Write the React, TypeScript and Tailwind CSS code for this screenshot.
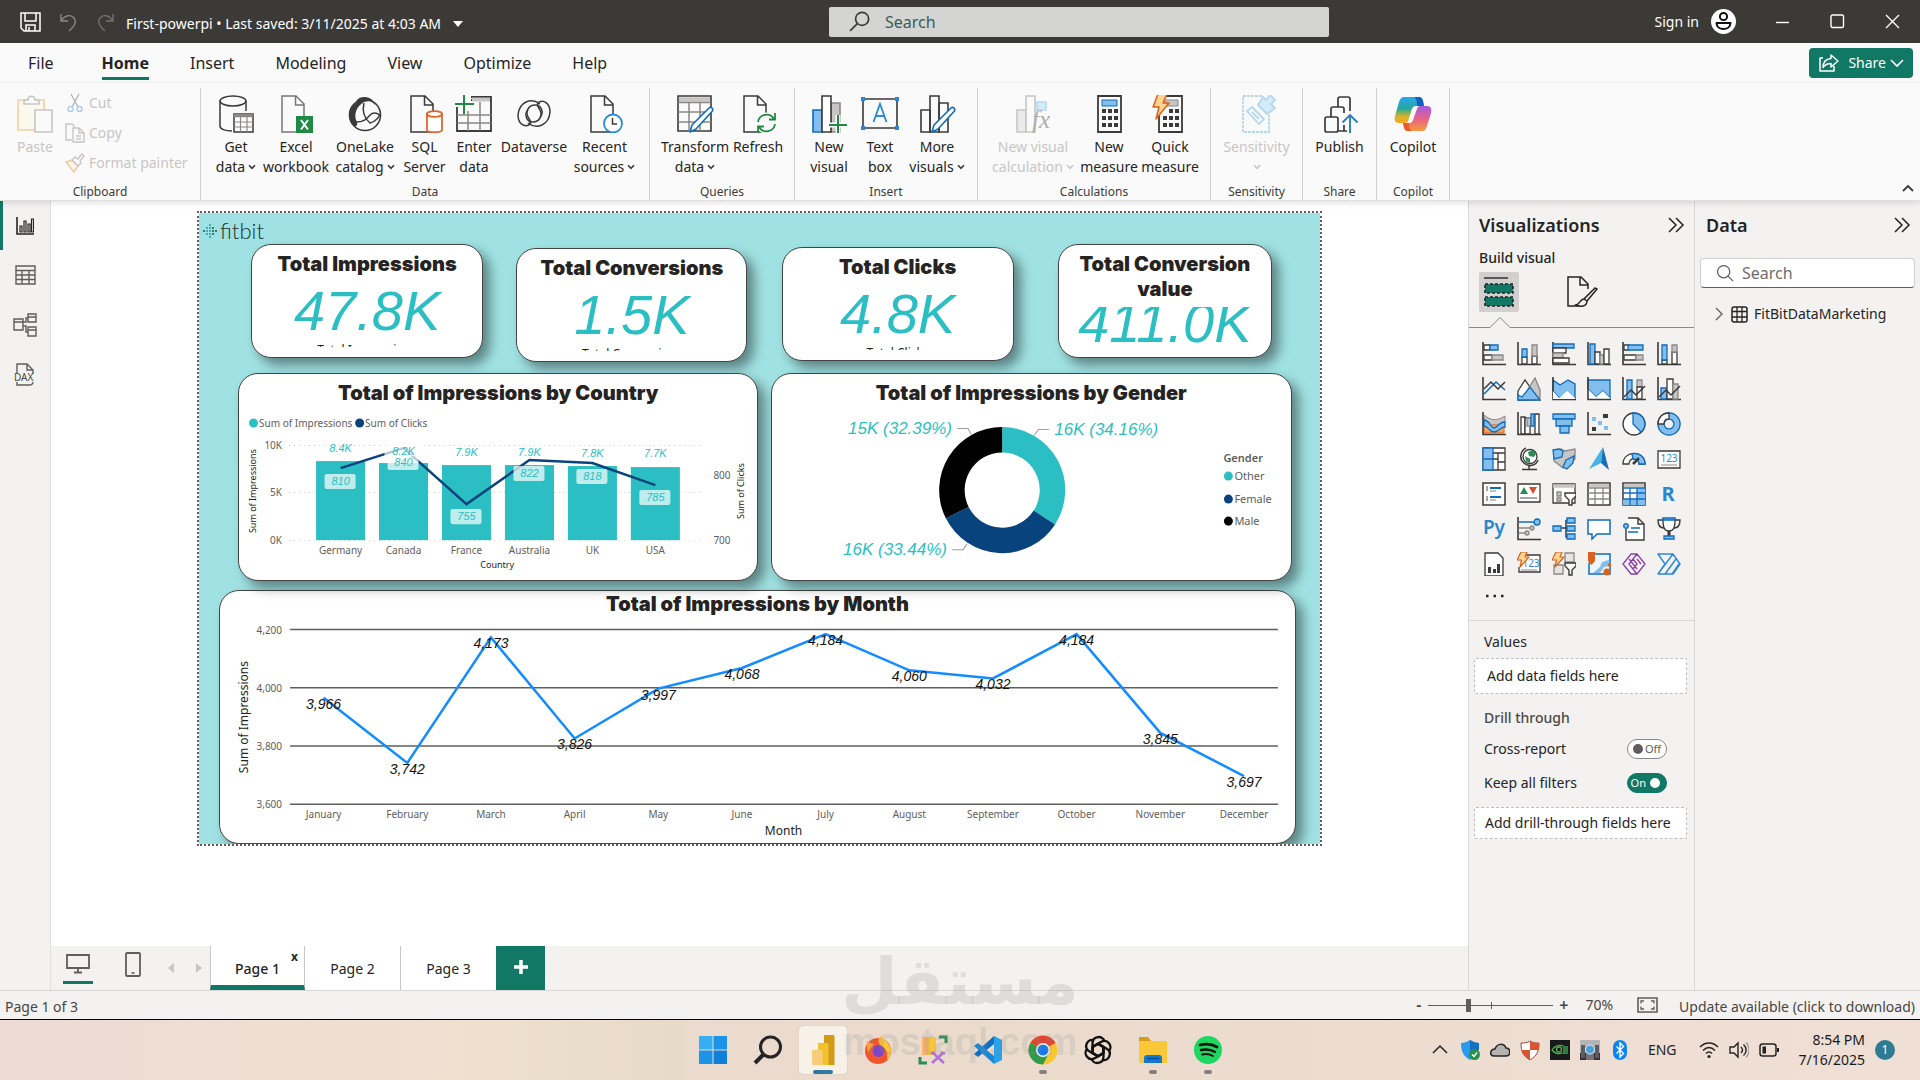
import React from "react";

const K = "#3b3a39";
const G = "#c8c6c4";
const GS = "#8a8886";
const B = "#83beec";
const BS = "#0f6cbd";
const TEAL = "#2bbfc3";
const NAVY = "#09437d";

type Kids = { children?: React.ReactNode };

/* ---------- small shared glyphs ---------- */

function Svg({ w = 24, h, vb, children, label }: Kids & { w?: number; h?: number; vb?: string; label?: string }) {
  return (
    <svg
      width={w}
      height={h ?? w}
      viewBox={vb ?? `0 0 ${w} ${h ?? w}`}
      fill="none"
      className="shrink-0"
      aria-hidden={label ? undefined : true}
      aria-label={label}
    >
      {children}
    </svg>
  );
}

function Chevron({ color = K }: { color?: string }) {
  return (
    <Svg w={8} h={6}>
      <path d="M1 1.2 4 4.4 7 1.2" stroke={color} strokeWidth="1.6" />
    </Svg>
  );
}

function DoubleChevron() {
  return (
    <Svg w={18}>
      <path d="M2 2l7 7-7 7M9 2l7 7-7 7" stroke="#252423" strokeWidth="1.5" />
    </Svg>
  );
}

function Lens({ size, flip, color }: { size: number; flip?: boolean; color: string }) {
  return (
    <Svg w={size} vb="0 0 20 20">
      {flip ? (
        <g stroke={color} strokeWidth="1.6">
          <circle cx="12.5" cy="7.5" r="6.2" />
          <path d="M8 12 1 19" />
        </g>
      ) : (
        <g stroke={color} strokeWidth="1.4">
          <circle cx="8.5" cy="8.5" r="6.8" />
          <path d="m13.5 13.5 5.5 5.5" />
        </g>
      )}
    </Svg>
  );
}

/* ---------- title bar ---------- */

function TitleBar() {
  return (
    <header className="grid h-[43px] grid-cols-[829fr_500fr_591fr] items-center bg-[#3b3a37] text-sm text-white">
      <div className="flex items-center">
        <button aria-label="Save" className="ml-5">
          <Svg w={21} h={20}>
            <path d="M1 1h19v18H4l-3-3zM5 1v8h11V1M6 19v-6h9v6M9 19v-4" stroke="#fff" strokeWidth="1.5" />
          </Svg>
        </button>
        <button aria-label="Undo" className="ml-[18px]">
          <Svg w={19} h={20}>
            <path d="M2 2v7h7M2 9c4-6 10-7 13-3s1 8-5 13" stroke="#8a8886" strokeWidth="1.4" />
          </Svg>
        </button>
        <button aria-label="Redo" className="ml-[18px]">
          <Svg w={19} h={20}>
            <path d="M17 2v7h-7M17 9C13 3 7 2 4 6s-1 8 5 13" stroke="#72716e" strokeWidth="1.4" />
          </Svg>
        </button>
        <button className="ml-[11px] flex items-center gap-3 pt-1 whitespace-nowrap">
          First-powerpi • Last saved: 3/11/2025 at 4:03 AM
          <Svg w={10} h={6}>
            <path d="M0 0h10L5 6z" fill="#fff" />
          </Svg>
        </button>
      </div>
      <label className="flex h-[30px] items-center gap-[15px] rounded-xs bg-[#d4d4d2] pl-5">
        <Lens size={21} flip color="#3b3a37" />
        <input
          aria-label="Search"
          placeholder="Search"
          className="min-w-0 flex-1 bg-transparent text-base outline-none placeholder:text-[#3a5c58]"
        />
      </label>
      <div className="flex items-center justify-end pr-5">
        <button className="flex items-center gap-3">
          Sign in
          <Svg w={25}>
            <circle cx="12.5" cy="12.5" r="12.5" fill="#fff" />
            <circle cx="12.5" cy="7.5" r="3.6" stroke="#111" strokeWidth="2" />
            <path d="M5.5 14h14c0 8-14 8-14 0z" stroke="#111" strokeWidth="2" strokeLinejoin="round" />
          </Svg>
        </button>
        <button aria-label="Minimize" className="ml-10">
          <Svg w={14}>
            <path d="M0 7.5h13" stroke="#fff" strokeWidth="1.4" />
          </Svg>
        </button>
        <button aria-label="Maximize" className="ml-10">
          <Svg w={15}>
            <rect x="1" y="1" width="12.5" height="12.5" rx="1.5" stroke="#fff" strokeWidth="1.4" />
          </Svg>
        </button>
        <button aria-label="Close" className="ml-10">
          <Svg w={15}>
            <path d="m1 1 13 13M14 1 1 14" stroke="#fff" strokeWidth="1.4" />
          </Svg>
        </button>
      </div>
    </header>
  );
}

/* ---------- menu ---------- */

function MenuBar() {
  return (
    <nav className="flex h-10 items-center bg-[#fafafa] pr-[7px] pl-7 text-base text-[#252423]">
      <div className="flex gap-[41px]">
        <button className="mr-[7px]">File</button>
        <button className="relative font-bold">
          Home
          <span className="absolute inset-x-0 -bottom-[5px] h-[3px] bg-[#117865]" />
        </button>
        <button>Insert</button>
        <button>Modeling</button>
        <button>View</button>
        <button>Optimize</button>
        <button>Help</button>
      </div>
      <button className="ml-auto flex h-[30px] items-center gap-2 rounded-sm bg-[#117865] px-[9px] text-sm text-white">
        <Svg w={22} h={20}>
          <path
            d="M5 5H2v13h14v-5M13 2l7 6-7 6v-3.500c-4 0-6 1-8 4 0-5 3-8.500 8-9z"
            stroke="#fff"
            strokeWidth="1.5"
            strokeLinejoin="round"
          />
        </Svg>
        <span className="flex items-center gap-1">
          Share
          <Svg w={14} h={9}>
            <path d="m1 1 6 6 6-6" stroke="#fff" strokeWidth="1.6" />
          </Svg>
        </span>
      </button>
    </nav>
  );
}

/* ---------- ribbon icons, drawn on a 38 unit square ---------- */

const page = "M5 1h14l8 8v28H5zM18.500 1v9H27";
const barsOutline = (
  <>
    <path d="M3 15h9v22H3z" />
    <path d="M12 1h9v36h-9z" />
    <path d="M21 8h9v29h-9z" />
  </>
);
const pencil = (
  <path
    d="M33 13c2-2 5 1 3 3.500L20 34l-6 3 2-7z"
    fill="#fff"
    stroke={BS}
    strokeWidth="1.600"
    strokeLinejoin="round"
  />
);
const bolt = (
  <path d="M8 0h9l-4 9h6L6 25l3-12H3z" fill="#ffd591" stroke="#d9621e" strokeWidth="1.500" strokeLinejoin="round" />
);
const swirl = "M25 9C16 2 4 7 3 20c0 9 6 12 11 10 3-2 1-5-1-8-3-6 1-12 7-12 7 0 9 8 5 12";

const ribbonIcons: Record<string, React.ReactNode> = {
  paste: (
    <g stroke={G} strokeWidth="1.600">
      <path d="M2 5h26v30H2z" stroke="#f3cfa5" fill="#fdf8ee" />
      <path d="M8 9V5h4c0-5 7-5 7 0h4v4z" fill="#fafafa" />
      <path d="M19 15h17v22H19z" fill="#fafafa" />
    </g>
  ),
  getData: (
    <g stroke={K} strokeWidth="1.500">
      <path d="M3 6v25c0 3 5 5 12 5" />
      <path d="M29 6v10" />
      <ellipse cx="16" cy="6" rx="13" ry="5" />
      <path d="M17 19h19v18H17z" fill="#fff" />
      <path d="M17 20.500h19" stroke={GS} strokeWidth="3.500" />
      <path d="M17 27h19M17 32h19M23.500 22v15M30 22v15" strokeWidth="1.200" stroke={GS} />
    </g>
  ),
  excel: (
    <g>
      <path d={page} stroke="#797775" strokeWidth="1.500" />
      <path d="M19 21h17v17H19z" fill="#1f8a43" />
      <path d="m24 25 7 9.500M31 25l-7 9.500" stroke="#fff" strokeWidth="2" />
    </g>
  ),
  onelake: (
    <g>
      <circle cx="19" cy="20" r="15.500" stroke={K} strokeWidth="1.600" />
      <path d="M18 2c-5 0-8 3-8 6C2 13 1 24 7 30c3 3 6 0 3-5-2-7 1-14 8-18 6-2 10 0 11 4C28 4 23 2 18 2z" fill={K} />
      <path d="M18 8c-2 8 0 15 6 20 4-1 8-4 10-9M10 27c7 0 10-2 14-7 3-3 7-2 10 0" stroke={K} strokeWidth="1.500" />
    </g>
  ),
  sql: (
    <g>
      <path d={page} stroke={K} strokeWidth="1.500" />
      <path d="M21 19v16c0 3 15 3 15 0V19z" fill="#fff" stroke="#e0662a" strokeWidth="1.800" />
      <ellipse cx="28.500" cy="19" rx="7.500" ry="2.800" fill="#fff" stroke="#e0662a" strokeWidth="1.800" />
    </g>
  ),
  enter: (
    <g>
      <path d="M2 12v24h34V2H16M16 5h20" stroke={K} strokeWidth="1.800" />
      <path d="M17 4.500h18" stroke={G} strokeWidth="4" />
      <path d="M2 20h34M2 28h34M13 16v20M25 7v29" stroke={GS} strokeWidth="1.500" />
      <path d="M9-1v20M0 9h19" stroke="#1f8a43" strokeWidth="2" />
    </g>
  ),
  dataverse: (
    <g stroke={K} strokeWidth="1.500">
      <path d={swirl} />
      <path d={swirl} transform="rotate(180 19 18.500)" />
    </g>
  ),
  recent: (
    <g>
      <path d={page} stroke={K} strokeWidth="1.500" />
      <circle cx="27" cy="28.500" r="9" fill="#fff" stroke="#2b88d8" strokeWidth="1.800" />
      <path d="M26.500 23v6H31" stroke={K} strokeWidth="1.500" />
    </g>
  ),
  transform: (
    <g>
      <path d="M2 1h33v35H2z" stroke={K} strokeWidth="1.600" />
      <path d="M3 4.500h31" stroke={G} strokeWidth="4.500" />
      <path d="M2 7.500h33M2 17h33M2 27h33M13 8v28M24 8v28" stroke={GS} strokeWidth="1.500" />
      {pencil}
    </g>
  ),
  refresh: (
    <g>
      <path d={page} stroke={K} strokeWidth="1.500" />
      <circle cx="27" cy="28" r="10.500" fill="#fafafa" />
      <path d="M19 27c1-8 12-10 16-3M36 29c-1 8-12 10-16 3M36 18v6.500h-6M19 38v-6.500h6" stroke="#1f8a43" strokeWidth="1.800" />
    </g>
  ),
  newVisual: (
    <g stroke={K} strokeWidth="1.600">
      <path d="M3 15h9v22H3z" fill={B} stroke={BS} />
      <path d="M21 8h9v29h-9z" fill={G} stroke={GS} />
      <path d="M12 1h9v36h-9z" fill="#fff" />
      <path d="M28 20v19M19 30h19" stroke="#fafafa" strokeWidth="5" />
      <path d="M28 20v19M19 30h18" stroke="#1f8a43" strokeWidth="2" />
    </g>
  ),
  textBox: (
    <g>
      <path d="M2 4h34v29H2z" stroke={K} strokeWidth="1.600" />
      <path d="M0 2h4v4H0zM34 2h4v4h-4zM0 31h4v4H0zM34 31h4v4h-4z" fill="#2b88d8" />
      <path d="m12.500 27 6.500-18 6.500 18M14.500 21h9" stroke="#2b88d8" strokeWidth="1.800" />
    </g>
  ),
  moreVisuals: (
    <g stroke={K} strokeWidth="1.600">
      {barsOutline}
      {pencil}
    </g>
  ),
  visualCalc: (
    <g stroke="#c8c6c4" strokeWidth="1.600">
      <path d="M3 15h9v22H3z" fill="#eceae8" />
      <path d="M12 1h9v36h-9z" fill="#fafafa" />
      <path d="M23 7h9v8h-9z" fill="#d5ebf9" stroke="#b4dbf3" />
      <text x="18" y="33" fontFamily="Liberation Serif" fontStyle="italic" fontSize="25" fill="#b0aeac" stroke="none">
        fx
      </text>
    </g>
  ),
  measure: (
    <g>
      <path d="M8 1h23v36H8z" stroke={K} strokeWidth="1.800" />
      <path d="M12 5h15v6H12z" fill={B} stroke={BS} />
      <path d="M12 14h4v4h-4zM18 14h4v4h-4zM24 14h4v4h-4zM12 21h4v4h-4zM18 21h4v4h-4zM24 21h4v4h-4zM12 28h4v4h-4zM18 28h4v4h-4zM24 28h4v4h-4z" fill={K} />
    </g>
  ),
  quick: (
    <g>
      <path d="M8 1h23v36H8z" stroke={K} strokeWidth="1.800" />
      <path d="M14 5h13v6H14z" fill={G} stroke={GS} />
      <path d="M12 21h4v4h-4zM18 14h4v4h-4zM24 14h4v4h-4zM18 21h4v4h-4zM24 21h4v4h-4zM12 28h4v4h-4zM18 28h4v4h-4zM24 28h4v4h-4z" fill={K} />
      <g transform="translate(-1 -1)">{bolt}</g>
    </g>
  ),
  sensitivity: (
    <g stroke="#b4d8ee" strokeWidth="1.800">
      <path d="M24 1H5v36h26V20" strokeDasharray="3 1" />
      <path d="m14 12 12 12-5 5L9 16zM14 17l7 7" />
      <path d="m20 10 9 9 8-6-4-4 4-4-5-5-4 5-3-3z" fill="#d5ebf9" />
    </g>
  ),
  publish: (
    <g stroke={K} strokeWidth="1.700">
      <rect x="4" y="22" width="13" height="15" rx="2" />
      <path d="M10 22V14q0-2 2-2h9q2 0 2 2v4M17 12V4q0-2 2-2h8q2 0 2 2v12M17 36h9M23 30v6" />
      <path d="M29 38V20M21.500 27.500 29 20l7.500 7.500" stroke="#2b7cc0" strokeWidth="1.900" />
    </g>
  ),
  copilot: (
    <g>
      <defs>
        <linearGradient id="cpA" x1="0" y1="0" x2="0" y2="1">
          <stop offset="0" stopColor="#2aa6f0" />
          <stop offset=".45" stopColor="#24a99a" />
          <stop offset=".75" stopColor="#d8b32a" />
          <stop offset="1" stopColor="#f7a81d" />
        </linearGradient>
        <linearGradient id="cpB" x1="0" y1="0" x2="0" y2="1">
          <stop offset="0" stopColor="#a35de0" />
          <stop offset=".5" stopColor="#e8608a" />
          <stop offset="1" stopColor="#f79a3a" />
        </linearGradient>
      </defs>
      <path d="M10 2h15c4 0 4 4 5 9h-8c-3 0-4 2-5 6l-3 9c-1 2-2 2-4 2H5c-4 0-5-3-4-7L5 7c1-3 2-5 5-5z" fill="url(#cpA)" />
      <path d="M20 2h5c4 0 4 4 5 9h-7c0-4 0-7-3-9z" fill="#0d62c4" />
      <path d="M28 36H14c-4 0-4-4-5-8h6c3 0 4-2 5-6l3-8c1-3 2-3 4-3h6c4 0 5 3 4 7l-4 13c-1 3-2 5-5 5z" fill="url(#cpB)" />
      <path d="M18 36h-4c-4 0-4-4-5-8h6c0 4 0 6 3 8z" fill="#ea5a2c" />
    </g>
  ),
};

type RBtn = { icon: string; a: string; b?: string; drop?: boolean; off?: boolean; w: string };

function RibbonButton({ icon, a, b, drop, off, w }: RBtn) {
  return (
    <button
      disabled={off}
      className={`flex flex-col items-center text-sm leading-5 whitespace-nowrap ${off ? "text-[#c8c6c4]" : "text-[#252423]"} ${w}`}
    >
      <Svg w={38}>{ribbonIcons[icon]}</Svg>
      <span className="mt-1">{a}</span>
      <span className="flex h-5 items-center gap-[3px]">
        {b}
        {drop && <Chevron color={off ? G : K} />}
      </span>
    </button>
  );
}

function RibbonGroup({ name, children }: Kids & { name: string }) {
  return (
    <section className="flex flex-col justify-between border-r border-[#d2d0ce] px-[9px] pt-[7px]">
      <div className="flex">{children}</div>
      <div className="text-center text-xs leading-4 whitespace-nowrap text-[#3b3a39]">{name}</div>
    </section>
  );
}

const groups: { name: string; items: RBtn[] }[] = [
  {
    name: "Data",
    items: [
      { icon: "getData", a: "Get", b: "data", drop: true, w: "w-[52px]" },
      { icon: "excel", a: "Excel", b: "workbook", w: "w-[68px]" },
      { icon: "onelake", a: "OneLake", b: "catalog", drop: true, w: "w-[70px]" },
      { icon: "sql", a: "SQL", b: "Server", w: "w-[49px]" },
      { icon: "enter", a: "Enter", b: "data", w: "w-[50px]" },
      { icon: "dataverse", a: "Dataverse", w: "w-[70px]" },
      { icon: "recent", a: "Recent", b: "sources", drop: true, w: "w-[71px]" },
    ],
  },
  {
    name: "Queries",
    items: [
      { icon: "transform", a: "Transform", b: "data", drop: true, w: "w-[72px]" },
      { icon: "refresh", a: "Refresh", w: "w-[54px]" },
    ],
  },
  {
    name: "Insert",
    items: [
      { icon: "newVisual", a: "New", b: "visual", w: "w-[50px]" },
      { icon: "textBox", a: "Text", b: "box", w: "w-[52px]" },
      { icon: "moreVisuals", a: "More", b: "visuals", drop: true, w: "w-[62px]" },
    ],
  },
  {
    name: "Calculations",
    items: [
      { icon: "visualCalc", a: "New visual", b: "calculation", drop: true, off: true, w: "w-[92px]" },
      { icon: "measure", a: "New", b: "measure", w: "w-[60px]" },
      { icon: "quick", a: "Quick", b: "measure", w: "w-[62px]" },
    ],
  },
  { name: "Sensitivity", items: [{ icon: "sensitivity", a: "Sensitivity", drop: true, off: true, w: "w-[73px]" }] },
  { name: "Share", items: [{ icon: "publish", a: "Publish", w: "w-[55px]" }] },
  { name: "Copilot", items: [{ icon: "copilot", a: "Copilot", w: "w-[54px]" }] },
];

function Ribbon() {
  return (
    <div className="relative z-10 flex h-[118px] items-stretch border-b border-[#e1dfdd] bg-[#fafafa] pt-[5px] shadow-[0_2px_6px_rgba(0,0,0,0.12)]">
      <RibbonGroup name="Clipboard">
        <div className="flex w-[182px]">
          <RibbonButton icon="paste" a="Paste" off w="w-[52px]" />
          <div className="-mt-0.5 flex flex-col gap-[10px] text-sm leading-5 whitespace-nowrap text-[#c8c6c4]">
            <button disabled className="flex items-center gap-1 pl-1">
              <Svg w={20}>
                <path d="m6 1 7 13M14 1 7 14" stroke={GS} strokeOpacity=".6" strokeWidth="1.400" />
                <circle cx="5.500" cy="16" r="2.500" stroke="#a9cfe8" strokeWidth="1.400" />
                <circle cx="14.500" cy="16" r="2.500" stroke="#a9cfe8" strokeWidth="1.400" />
              </Svg>
              Cut
            </button>
            <button disabled className="flex items-center gap-1 pl-1">
              <Svg w={20}>
                <path d="M7 17H1V1h6l3 3M8 5h6l5 5v9H8zM14 5v5h5M11 13h5M11 16h5" stroke={G} strokeWidth="1.400" />
              </Svg>
              Copy
            </button>
            <button disabled className="flex items-center gap-1 pl-1">
              <Svg w={20}>
                <path d="m1 9 6-2 6 6-4 6z" fill="#fdf3e6" stroke="#f0c7a0" strokeWidth="1.400" />
                <path d="m7 7 3-3 3 2 4-5 2 2-4 5 1 2-3 3z" stroke={G} strokeWidth="1.400" />
              </Svg>
              Format painter
            </button>
          </div>
        </div>
      </RibbonGroup>
      {groups.map((g) => (
        <RibbonGroup key={g.name} name={g.name}>
          {g.items.map((i) => (
            <RibbonButton key={i.icon} {...i} />
          ))}
        </RibbonGroup>
      ))}
      <button aria-label="Collapse ribbon" className="mt-auto mr-1.5 mb-2 ml-auto">
        <Svg w={12} h={8}>
          <path d="m1 7 5-5 5 5" stroke={K} strokeWidth="1.800" />
        </Svg>
      </button>
    </div>
  );
}

/* ---------- left rail ---------- */

function Rail() {
  return (
    <aside className="flex w-[51px] shrink-0 flex-col border-r border-[#e1dfdd] bg-[#f3f2f1]">
      <button
        aria-label="Report view"
        className="flex h-[49px] items-center justify-center border-l-[3px] border-[#117865] pr-[3px]"
      >
        <Svg w={18}>
          <path d="M1 0v17h17" stroke="#252423" strokeWidth="1.600" />
          <path d="M4 9h2v6H4zM8 4h2v11H8zM12 7h2v8h-2zM15.500 2h2v13h-2z" stroke="#252423" strokeWidth="1.200" />
        </Svg>
      </button>
      <button aria-label="Table view" className="flex h-[50px] items-center justify-center">
        <Svg w={21} h={20}>
          <path d="M1 1h19v18H1zM1 5.500h19M1 10h19M1 14.500h19M7 5v14M14 5v14" stroke="#605e5c" strokeWidth="1.400" />
        </Svg>
      </button>
      <button aria-label="Model view" className="flex h-[50px] items-center justify-center">
        <Svg w={24}>
          <path
            d="M1 6h9v11H1zM1 9h9M15 1h8v8h-8zM15 4h8M15 14h8v9h-8zM15 17h8M10 9h3V5h2M10 13h3v6h2"
            stroke="#605e5c"
            strokeWidth="1.400"
          />
        </Svg>
      </button>
      <button aria-label="DAX query view" className="flex h-[50px] items-center justify-center">
        <Svg w={24}>
          <path d="M4 10V1h10l6 6v4M14 1v6h6M4 19v3h12c3 0 4-1 4-3" stroke="#605e5c" strokeWidth="1.400" />
          <text x="1" y="18" fontSize="10" fontFamily="Noto Sans" fill="#484644">
            DAX
          </text>
        </Svg>
      </button>
    </aside>
  );
}

/* ---------- report canvas ---------- */

const CANVAS_W = 1120;
const CANVAS_H = 630;

type Box = { x: number; y: number; w: number; h: number };

function Visual({ box, children, title, tight }: Kids & { box: Box; title: string; tight?: boolean }) {
  return (
    <section
      className="absolute flex flex-col rounded-[20px] border border-[#444] bg-white shadow-[7px_7px_12px_rgba(0,0,0,0.42)]"
      style={{
        left: `${(box.x / CANVAS_W) * 100}%`,
        top: `${(box.y / CANVAS_H) * 100}%`,
        width: `${(box.w / CANVAS_W) * 100}%`,
        height: `${(box.h / CANVAS_H) * 100}%`,
      }}
    >
      <h2
        className={`px-3 text-center font-['Inter',sans-serif] text-xl leading-[25px] font-black text-[#252423] ${tight ? "pt-px" : "pt-[7px]"}`}
      >
        {title}
      </h2>
      {children}
    </section>
  );
}

function Kpi({ box, title, value, label }: { box: Box; title: string; value: string; label?: string }) {
  return (
    <Visual box={box} title={title}>
      <div className="mt-[5px] mb-[10px] flex min-h-0 flex-1 items-center justify-center overflow-hidden">
        <div className="flex h-14 flex-col items-center font-['Liberation_Sans',sans-serif] whitespace-nowrap">
          <span className="text-[56px] leading-[48px] text-[#2bbfc3] italic">{value}</span>
          {label && (
            <span className="mt-[10px] font-['Noto_Sans',sans-serif] text-xs leading-[10px] text-[#252423]">{label}</span>
          )}
        </div>
      </div>
    </Visual>
  );
}

const countries = [
  { name: "Germany", total: "8.4K", top: 88, ly: 75, clicks: "810", py: 95, by: 101 },
  { name: "Canada", total: "8.2K", top: 90, ly: 78, clicks: "840", py: 75, by: 82 },
  { name: "France", total: "7.9K", top: 92, ly: 79, clicks: "755", py: 131, by: 136 },
  { name: "Australia", total: "7.9K", top: 92, ly: 79, clicks: "822", py: 87, by: 93 },
  { name: "UK", total: "7.8K", top: 93, ly: 80, clicks: "818", py: 90, by: 96 },
  { name: "USA", total: "7.7K", top: 94, ly: 80, clicks: "785", py: 112, by: 117 },
];

const chartClass = "absolute inset-0 h-full w-full overflow-visible font-['Noto_Sans',sans-serif]";

function CountryChart() {
  const cx = (i: number) => 102.500 + i * 62.900;
  return (
    <svg viewBox="1 0 518 206" className={chartClass} role="img" aria-label="Impressions and clicks by country">
      <circle cx="15.500" cy="49" r="4.500" fill={TEAL} />
      <circle cx="121.500" cy="49" r="4.500" fill={NAVY} />
      <g fontSize="10" fill="#605e5c">
        <text x="21" y="53">Sum of Impressions</text>
        <text x="127" y="53">Sum of Clicks</text>
        <g textAnchor="end">
          <text x="44" y="75">10K</text>
          <text x="44" y="122">5K</text>
          <text x="44" y="170">0K</text>
        </g>
        <text x="475" y="105">800</text>
        <text x="475" y="170">700</text>
        <g textAnchor="middle">
          {countries.map((c, i) => (
            <text key={c.name} x={cx(i)} y="180">{c.name}</text>
          ))}
        </g>
      </g>
      <g stroke="#d2d0ce" strokeDasharray="1 4">
        <path d="M51 71.500h415M51 118.500h415M51 166.500h415M471 101.500h8M471 166.500h8" />
      </g>
      <g fontSize="9" fill="#252423" textAnchor="middle">
        <text x="259" y="194">Country</text>
        <text transform="translate(18 117) rotate(-90)">Sum of Impressions</text>
        <text transform="translate(506 117) rotate(-90)">Sum of Clicks</text>
      </g>
      {countries.map((c, i) => (
        <rect key={c.name} x={cx(i) - 24.500} y={c.top - 1} width="49" height={167 - c.top} fill={TEAL} />
      ))}
      <polyline points={countries.map((c, i) => `${cx(i)},${c.py - 1}`).join(" ")} fill="none" stroke={NAVY} strokeWidth="2.500" />
      <rect x={cx(1) - 19} y="69" width="37" height="13" fill="#fff" fillOpacity=".7" />
      <g fontSize="11" fontStyle="italic" fontFamily="Liberation Sans" textAnchor="middle" fill={TEAL}>
        {countries.map((c, i) => (
          <g key={c.name}>
            <rect x={cx(i) - 16} y={c.by - 1} width="31" height="15" rx="2" fill="#fff" fillOpacity=".7" />
            <text x={cx(i)} y={c.ly + 3}>{c.total}</text>
            <text x={cx(i)} y={c.by + 10}>{c.clicks}</text>
          </g>
        ))}
      </g>
    </svg>
  );
}

const slices = [
  { name: "Other", share: 34.160, color: TEAL, ly: 102 },
  { name: "Female", share: 33.440, color: NAVY, ly: 125 },
  { name: "Male", share: 32.390, color: "#000", ly: 147 },
];

function arc(from: number, to: number) {
  const p = (t: number, r: number) => {
    const a = (t / 100) * 2 * Math.PI;
    return `${231 + r * Math.sin(a)} ${116 - r * Math.cos(a)}`;
  };
  return `M${p(from, 63)}A63 63 0 0 1 ${p(to, 63)}L${p(to, 37.500)}A37.500 37.500 0 0 0 ${p(from, 37.500)}z`;
}

function GenderChart() {
  let start = 0;
  return (
    <svg viewBox="1 0 519 206" className={chartClass} role="img" aria-label="Impressions by gender">
      {slices.map((s) => {
        const d = arc(start, start + s.share);
        start += s.share;
        return <path key={s.name} d={d} fill={s.color} />;
      })}
      <path d="M186 54.500h11l3 6M277.500 55.500H267l-4 6M181 175.500h11l4-6" fill="none" stroke="#a19f9d" />
      <g fontSize="17" fontStyle="italic" fontFamily="Liberation Sans" fill={TEAL}>
        <text x="77" y="60">15K (32.39%)</text>
        <text x="283" y="61">16K (34.16%)</text>
        <text x="72" y="181">16K (33.44%)</text>
      </g>
      <g fontSize="11" fill="#605e5c">
        <text x="452" y="88" fontWeight="600">Gender</text>
        {slices.map((s) => (
          <g key={s.name}>
            <circle cx="457" cy={s.ly} r="4.500" fill={s.color} />
            <text x="463" y={s.ly + 4}>{s.name}</text>
          </g>
        ))}
      </g>
    </svg>
  );
}

const months: [string, number][] = [
  ["January", 3966],
  ["February", 3742],
  ["March", 4173],
  ["April", 3826],
  ["May", 3997],
  ["June", 4068],
  ["July", 4184],
  ["August", 4060],
  ["September", 4032],
  ["October", 4184],
  ["November", 3845],
  ["December", 3697],
];

function MonthChart() {
  const mx = (i: number) => 104.500 + i * 83.600;
  const my = (v: number) => 38.500 + (4200 - v) * 0.291;
  return (
    <svg viewBox="1 0 1074 251" className={chartClass} role="img" aria-label="Impressions by month">
      <g stroke="#605e5c" strokeWidth="1.500">
        {[4200, 4000, 3800, 3600].map((v) => (
          <path key={v} d={`M71 ${my(v)}H1058`} />
        ))}
      </g>
      <g fontSize="10" fill="#605e5c">
        {[4200, 4000, 3800, 3600].map((v) => (
          <text key={v} x="63" y={my(v) + 4} textAnchor="end">{v.toLocaleString("en-US")}</text>
        ))}
        {months.map(([m], i) => (
          <text key={m} x={mx(i)} y="227" textAnchor="middle">{m}</text>
        ))}
      </g>
      <g fontSize="12" fill="#252423" textAnchor="middle">
        <text x="564" y="244">Month</text>
        <text transform="translate(29 126) rotate(-90)">Sum of Impressions</text>
      </g>
      <polyline points={months.map(([, v], i) => `${mx(i)},${my(v)}`).join(" ")} fill="none" stroke="#118dff" strokeWidth="2.500" />
      <g fontSize="14" fontStyle="italic" fontFamily="Liberation Sans" textAnchor="middle" fill="#111">
        {months.map(([m, v], i) => (
          <text key={m} x={mx(i)} y={my(v) + 11}>{v.toLocaleString("en-US")}</text>
        ))}
      </g>
    </svg>
  );
}

function FitbitLogo() {
  return (
    <div className="flex items-center gap-[3px] pt-1.5 pl-1">
      <Svg w={14}>
        {[
          [7, 1], [7, 4], [7, 7], [7, 10], [7, 13], [4, 4], [4, 7], [4, 10], [1, 7], [10, 4], [10, 7], [10, 10], [13, 7],
        ].map(([x, y]) => (
          <circle key={`${x}-${y}`} cx={x} cy={y} r="1" fill={x === 7 || x === 4 ? "#1f9ea3" : "#2b4b4c"} />
        ))}
      </Svg>
      <span className="font-['Lato',sans-serif] text-[22px] leading-6 font-light text-[#1d3334]">fitbit</span>
    </div>
  );
}

function ReportCanvas() {
  return (
    <div className="px-[146px] pt-2.5">
      <div className="border-2 border-dotted border-[#605e5c]">
        <div className="relative aspect-video overflow-hidden bg-[#a0e2e3]">
          <FitbitLogo />
          <Visual tight box={{ x: 20, y: 377, w: 1076, h: 253 }} title="Total of Impressions by Month">
            <MonthChart />
          </Visual>
          <Kpi box={{ x: 52, y: 31, w: 232, h: 114 }} title="Total Impressions" value="47.8K" label="Total Impressions" />
          <Kpi box={{ x: 317, y: 35, w: 231, h: 114 }} title="Total Conversions" value="1.5K" label="Total Conversions" />
          <Kpi box={{ x: 582, y: 34, w: 232, h: 114 }} title="Total Clicks" value="4.8K" label="Total Clicks" />
          <Kpi box={{ x: 858, y: 31, w: 214, h: 114 }} title="Total Conversion value" value="411.0K" />
          <Visual box={{ x: 39, y: 160, w: 520, h: 208 }} title="Total of Impressions by Country">
            <CountryChart />
          </Visual>
          <Visual box={{ x: 571, y: 160, w: 521, h: 208 }} title="Total of Impressions by Gender">
            <GenderChart />
          </Visual>
        </div>
      </div>
    </div>
  );
}

/* ---------- page tabs ---------- */

function PageTabs() {
  return (
    <div className="flex h-11 items-stretch bg-[#f3f2f1] text-sm text-[#252423]">
      <button aria-label="Desktop layout" className="ml-3 flex w-[30px] flex-col items-center justify-between pt-2 pb-1.5">
        <Svg w={24} h={20}>
          <path d="M1 1h22v13H1zM12 14v4M8 18.500h8" stroke="#605e5c" strokeWidth="1.800" />
        </Svg>
        <span className="h-[3px] w-full bg-[#117865]" />
      </button>
      <button aria-label="Mobile layout" className="ml-8 flex pt-1.5">
        <Svg w={16} h={26}>
          <rect x="1" y="1" width="14" height="23" rx="1" stroke="#605e5c" strokeWidth="1.800" />
          <path d="M6.500 21h3" stroke="#605e5c" strokeWidth="1.600" />
        </Svg>
      </button>
      <button aria-label="Previous page" className="ml-[27px]">
        <Svg w={6} h={10}>
          <path d="M6 0v10L0 5z" fill={G} />
        </Svg>
      </button>
      <button aria-label="Next page" className="mr-2 ml-[22px]">
        <Svg w={6} h={10}>
          <path d="M0 0v10l6-5z" fill={G} />
        </Svg>
      </button>
      <button className="relative w-[95px] border-x border-b-[5px] border-x-[#c8c6c4] border-b-[#117865] bg-white pt-1.5 font-medium">
        Page 1<span className="absolute top-[3px] right-1.5 text-xs leading-4 font-bold">x</span>
      </button>
      <button className="w-[96px] border-r border-[#c8c6c4] bg-white pt-0.5">Page 2</button>
      <button className="w-[95px] bg-white pt-0.5">Page 3</button>
      <button aria-label="New page" className="flex w-[49px] items-center justify-center bg-[#117865] pb-0.5">
        <Svg w={14}>
          <path d="M7 0v14M0 7h14" stroke="#fff" strokeWidth="3.500" />
        </Svg>
      </button>
    </div>
  );
}

/* ---------- visualization gallery icons, 24 unit square ---------- */

const axis = <path d="M1 0v22.500h23" stroke={K} strokeWidth="1.600" />;
const bf = { fill: B, stroke: BS, strokeWidth: 1.300 };
const gf = { fill: G, stroke: GS, strokeWidth: 1.300 };
const wf = { fill: "#fff", stroke: K, strokeWidth: 1.300 };
const frame = <path d="M1 1h22v22H1z" fill="#fff" stroke={K} strokeWidth="1.500" />;
const numText = (x: number, y: number) => (
  <text x={x} y={y} fontSize="10" fontFamily="Noto Sans" fill="#2b88d8" textAnchor="middle">
    123
  </text>
);
const funnel = <path d="M13 11h11v3l-4 4v5h-3v-5l-4-4z" fill="#fff" stroke={K} strokeWidth="1.400" />;
const smallBolt = (
  <path d="M4 0h6L8 5h4l-9 10 1.500-7H0z" fill="#ffd591" stroke="#d9621e" strokeWidth="1.200" strokeLinejoin="round" />
);

const gallery: [string, React.ReactNode][] = [
  ["Stacked bar chart", <>{axis}<path d="M2 3h6v5H2z" {...wf} /><path d="M8 3h8v5H8z" {...bf} /><path d="M2 13h8v5H2z" {...wf} /><path d="M10 13h11v5H10z" {...gf} /></>],
  ["Stacked column chart", <>{axis}<path d="M5 15h5v7H5z" {...wf} /><path d="M5 7h5v8H5z" {...bf} /><path d="M15 14h5v8h-5z" {...wf} /><path d="M15 3h5v11h-5z" {...gf} /></>],
  ["Clustered bar chart", <>{axis}<path d="M1 2h21v4H1z" {...bf} /><path d="M1 6h13v5H1z" {...wf} /><path d="M1 11h10v5H1z" {...gf} /><path d="M1 16h16v5H1z" {...wf} /></>],
  ["Clustered column chart", <>{axis}<path d="M3 2h5v20H3z" {...bf} /><path d="M8 10h5v12H8z" {...wf} /><path d="M13 13h4v9h-4z" {...gf} /><path d="M17 7h5v15h-5z" {...wf} /></>],
  ["100% stacked bar chart", <>{axis}<path d="M2 3h5v5H2z" {...wf} /><path d="M6 3h15v5H6z" {...bf} /><path d="M2 13h12v5H2z" {...wf} /><path d="M14 13h7v5h-7z" {...gf} /></>],
  ["100% stacked column chart", <>{axis}<path d="M5 18h5v4H5z" {...wf} /><path d="M5 3h5v15H5z" {...bf} /><path d="M15 10h5v12h-5z" {...wf} /><path d="M15 3h5v7h-5z" {...gf} /></>],
  ["Line chart", <>{axis}<path d="m2 17 12-12 9 8" stroke={BS} strokeWidth="1.500" /><path d="m2 12 7-7 7 7 7-7" stroke={K} strokeWidth="1.500" /></>],
  ["Area chart", <><path d="m1 14 7-11 9 13v7H1z" {...wf} /><path d="m11 12 7-11 5 12v10H12z" {...gf} /><path d="m1 18 4 2 8-10 10 13H1z" {...bf} /></>],
  ["Stacked area chart", <><path d="m1 3 7 5 8-5 7 4v15l-8-6-8 5-6-7z" fill={B} stroke={BS} strokeWidth="1.400" />{axis}<path d="m1 14 6 7 8-7 8 7v1H1z" fill="#fff" /></>],
  ["100% stacked area chart", <><path d="M1 3h22v18l-7-7-7 6-8-8z" {...bf} /><path d="m1 12 8 8 7-6 7 7v1H1z" fill="#fff" />{axis}</>],
  ["Line and stacked column chart", <>{axis}<path d="M5 3h5v19H5z" {...bf} /><path d="M15 3h5v7h-5z" {...gf} /><path d="M15 10h5v12h-5z" {...wf} /><path d="m2 20 7-7 5 5 9-9" stroke={K} strokeWidth="1.500" /></>],
  ["Line and clustered column chart", <>{axis}<path d="M4 11h6v11H4z" {...bf} /><path d="M10 2h6v20h-6z" {...wf} /><path d="M16 7h5v15h-5z" {...gf} /><path d="m2 20 7-7 5 5 9-9" stroke={K} strokeWidth="1.500" /></>],
  ["Ribbon chart", <><path d="M2 3c7 6 13 6 21 1v6c-7 5-14 5-21 0z" fill={G} stroke={GS} /><path d="M2 13h20v8H2z" fill="#f7a35c" stroke="#d9621e" /><path d="M2 8c7 1 6 8 10 8s4-6 11-6v5c-6 0-5 5-11 5S8 15 2 14z" {...bf} />{axis}</>],
  ["Waterfall chart", <>{axis}<path d="M4 5h4v17H4zM18 2h4v20h-4z" {...wf} /><path d="M8 6h5v16H8z" {...wf} /><path d="M10 6h4v8h-4z" {...gf} /><path d="M14 2h3v12h-3z" {...bf} /></>],
  ["Funnel chart", <><path d="M1 2h22v5H1z" {...bf} /><path d="M4 7h16v7H4z" {...bf} /><path d="M8 14h9v7H8z" {...bf} /></>],
  ["Scatter chart", <>{axis}<path d="M16 2h5v4h-5zM5 15h4v4H5z" fill={K} /><path d="M5 5h4v4H5zM11 9h4v4h-4zM17 14h4v4h-4z" fill={B} /></>],
  ["Pie chart", <><circle cx="12" cy="12" r="11" {...wf} /><path d="M11 12V1c12 0 15 13 8 19z" {...bf} /></>],
  ["Donut chart", <><circle cx="12" cy="12" r="8" stroke={BS} strokeWidth="7.500" /><circle cx="12" cy="12" r="8" stroke={B} strokeWidth="5" /><path d="M1 12C1 6 5 1 12 1v6c-3 0-5 2-5 5z" {...wf} /></>],
  ["Treemap", <><path d="M1 1h22v22H1z" {...wf} /><path d="M1 1h10v11H1zM1 12h10v11H1z" {...bf} /><path d="M11 6h12M11 12h5M16 6v17M16 15h7" stroke={K} strokeWidth="1.300" /></>],
  ["Map", <><path d="M9 1C3 4 2 12 7 16s12 3 14-3M5 22.500h15M12 18v5" stroke={K} strokeWidth="1.500" /><circle cx="13" cy="9.500" r="7" {...wf} /><path d="m11 5 5-2 3 4-2 3-5-1zM8 9l5 3v4l-4-2z" fill="#2e8b57" /></>],
  ["Filled map", <><path d="m2 3 7-1 4 2 10-2v10l-6 7-6 2-9-7z" {...gf} /><path d="m1 3 6-1 4 2-1 6-8 2z" {...bf} /><path d="m14 13 8-4-1 7-6 6-4-2z" {...bf} /></>],
  ["Azure map", <><path d="M16 0 2 22l12-6z" fill="#49b4e6" /><path d="m16 0-2 16 8 7z" fill="#176fb8" /></>],
  ["Gauge", <><path d="M1 17C1 3 23 3 23 17h-6c0-7-10-7-10 0z" {...wf} /><path d="M10 7c7-2 13 3 13 10h-6c0-4-3-5-6-5z" {...bf} /><path d="m11 17 6-6" stroke={K} strokeWidth="2.500" /></>],
  ["Card", <><path d="M1 4h22v17H1z" {...wf} />{numText(12, 15)}<path d="M4 18h16" stroke={GS} /></>],
  ["Multi-row card", <>{frame}<path d="M5 4v5M5 14v5" stroke={GS} strokeWidth="1.500" /><path d="M8 6h11M8 15h11" stroke={BS} strokeWidth="2" /><path d="M8 9h6M8 18h6" stroke={GS} /></>],
  ["KPI", <><path d="M1 2h22v18H1z" {...wf} /><path d="m3 12 4-7 4 7z" fill="#2e8b57" /><path d="m12 5 4 7 4-7z" fill="#e0492a" /><path d="M3 16h17" stroke={GS} strokeWidth="1.500" /></>],
  ["Slicer", <><path d="M1 2h22v19H1z" {...wf} /><path d="M1 4h22" stroke={G} strokeWidth="3.500" /><path d="M5 10h4v4H5zM5 16h4v3H5z" {...gf} />{funnel}</>],
  ["Table", <>{frame}<path d="M2 3.500h20" stroke={G} strokeWidth="3.500" /><path d="M1 6h22M1 11h22M1 17h22M8 6v17M16 6v17" stroke={GS} strokeWidth="1.300" /></>],
  ["Matrix", <>{frame}<path d="M2 3.500h20" stroke={G} strokeWidth="3.500" /><path d="M15 6h8v17H1v-6h14z" fill={B} /><path d="M1 6h22M1 11h22M1 17h22M8 6v17M15 6v17" stroke={BS} strokeWidth="1.300" /></>],
  ["R script visual", <text x="11" y="19" fontSize="20" fontWeight="700" fontFamily="Noto Sans" fill="#2788cf" textAnchor="middle">R</text>],
  ["Python visual", <text x="12" y="17" fontSize="19" fontWeight="600" fontFamily="Noto Sans" fill="#2788cf" textAnchor="middle">Py</text>],
  ["Key influencers", <>{axis}<path d="M2 5h16" stroke={BS} strokeWidth="1.500" /><circle cx="20" cy="5" r="3" {...bf} /><path d="M2 11h11M2 16h6" stroke={GS} strokeWidth="1.500" /><circle cx="15" cy="11" r="2" {...gf} /><circle cx="10" cy="16" r="2" {...gf} /></>],
  ["Decomposition tree", <><path d="M9 11h5M14 3v17h2M14 3h2M14 11h2" stroke={K} strokeWidth="1.500" /><path d="M1 9h8v5H1zM15 1h8v5h-8zM15 9h8v5h-8zM15 17h8v5h-8z" {...bf} /></>],
  ["Q&A", <path d="M1 3h22v14H10l-5 5v-5H1z" fill="#fff" stroke={BS} strokeWidth="1.500" />],
  ["Narrative", <><path d="M6 1h10l6 6v16H4V12M16 1v6h6" stroke={K} strokeWidth="1.400" fill="#fff" /><circle cx="4" cy="9" r="2.300" {...bf} /><path d="M9 11h9M6 15h10" stroke={BS} strokeWidth="1.300" /></>],
  ["Goals", <><path d="M6 3H1c0 6 2 8 6 8M18 3h5c0 6-2 8-6 8" stroke={K} strokeWidth="1.400" /><path d="M6 2h12c0 8-1 12-6 12S6 10 6 2z" {...wf} /><path d="M12 14v5" stroke={K} strokeWidth="3" /><path d="M6 1h12v2H6zM7 19h10v3H7z" {...bf} /></>],
  ["Paginated report", <><path d="M3 1h13l5 5v18H3z" {...wf} /><path d="M6 15h3v6H6zM11 17h3v4h-3zM15 12h3v9h-3z" fill={K} /></>],
  ["Card (new)", <><path d="M6 3h17v17H2v-5" {...wf} />{numText(14, 15)}{smallBolt}<path d="M4 18h16" stroke={GS} /></>],
  ["Slicer (new)", <><path d="M13 1h9v9h-9zM2 13h9v9H2z" {...gf} fillOpacity=".3" />{smallBolt}{funnel}</>],
  ["ArcGIS map", <><path d="M7 2h16v20H2V12z" fill="#eef6fc" stroke={BS} strokeWidth="1.500" /><path d="M22 8l-7 2-2 5-7 6h7l4-6 6-1z" fill={B} /><path d="M1 0h7v9l-3.500 4L1 9z" fill="#d9621e" /><circle cx="20" cy="20" r="3.500" fill="#d9621e" /><circle cx="22.500" cy="13" r="1.800" fill="#d9621e" /></>],
  ["Power Apps", <path d="M9 2h6l8 10-8 10H9L1 12zM15 2 7 12l8 10M7 7l8 10M11 7l4 5-4 5M15 7l4 5" stroke="#8a3fa8" strokeWidth="1.300" strokeLinejoin="round" />],
  ["Power Automate", <path d="M1 2h15l7 10-7 10H1l7-10zM1 22 16 2M8 22l11-15M15 22l7-10" stroke="#2b88d8" strokeWidth="1.400" strokeLinejoin="round" />],
];

/* ---------- right panels ---------- */

function Toggle({ id, on }: { id: string; on?: boolean }) {
  return (
    <span
      className={`relative flex h-5 w-10 items-center rounded-full border text-[11px] ${
        on ? "justify-end border-[#117865] bg-[#117865] pr-1.5 text-white" : "border-[#8a8886] bg-white pl-[5px] text-[#605e5c]"
      }`}
    >
      <input id={id} type="checkbox" role="switch" defaultChecked={on} className="absolute inset-0 m-0 h-full w-full opacity-0" />
      {on ? (
        <>
          <span className="mr-1">On</span>
          <span className="size-[10px] rounded-full bg-white" />
        </>
      ) : (
        <>
          <span className="mr-0.5 size-[10px] rounded-full bg-[#605e5c]" />
          <span>Off</span>
        </>
      )}
    </span>
  );
}

function VisualizationsPanel() {
  return (
    <aside className="flex w-[226px] shrink-0 flex-col border-l border-[#d9d7d5] bg-[#f3f2f1] text-sm text-[#252423]">
      <div className="flex items-center justify-between pt-[9px] pr-[9px] pl-2.5">
        <h2 className="text-lg leading-[30px] font-semibold">Visualizations</h2>
        <button aria-label="Collapse visualizations">
          <DoubleChevron />
        </button>
      </div>
      <h3 className="mt-1.5 pl-2.5 leading-6 font-medium">Build visual</h3>
      <div className="mt-0.5 flex gap-[43px] pl-2.5">
        <button aria-label="Build visual" className="flex size-10 items-center justify-center rounded-xs bg-[#d2d0ce]">
          <Svg w={30}>
            <path d="M0 1h24" stroke="#252423" strokeWidth="1.400" />
            <path d="M1 7h28v9H1zM1 20h28v9H1z" fill="#117865" stroke="#252423" strokeWidth="1.600" strokeDasharray="3 2" />
          </Svg>
        </button>
        <button aria-label="Format page" className="flex size-10 items-center justify-center">
          <Svg w={32}>
            <path d="M12 30H2V1h13l7 7v5M14 1v8h8" stroke="#252423" strokeWidth="1.500" />
            <path d="m29 12-11 11 3 2 10-12zM18 23c-4 0-4 5-8 6 4 2 11 2 11-4" stroke="#252423" strokeWidth="1.500" fill="#f3f2f1" />
          </Svg>
        </button>
      </div>
      <svg viewBox="0 0 226 12" preserveAspectRatio="xMinYMin slice" className="mt-1 h-3 w-full" fill="none" aria-hidden>
        <path d="M0 11.500h21l10-10 10 10h400" stroke="#8a8886" />
      </svg>
      <div className="mt-[14px] grid grid-cols-6 gap-y-[11px] px-[7px]">
        {gallery.map(([name, icon]) => (
          <button key={name} aria-label={name} className="flex h-6 items-center justify-center">
            <Svg w={24}>{icon}</Svg>
          </button>
        ))}
      </div>
      <button aria-label="Get more visuals" className="mt-3 ml-4 w-6">
        <Svg w={20} h={16}>
          <path d="M1 8h2.500M8.500 8H11M16 8h2.500" stroke="#252423" strokeWidth="2.500" />
        </Svg>
      </button>
      <div className="mt-4 border-t border-[#d9d7d5] pt-[9px] pr-[7px] pl-[5px]">
        <h3 className="pl-2.5 leading-6">Values</h3>
        <div className="mt-1 flex h-9 items-center rounded-xs border border-dashed border-[#c0bebc] bg-white pl-3 whitespace-nowrap">
          Add data fields here
        </div>
        <h3 className="mt-3 pl-2.5 leading-6 font-medium text-[#4a4947]">Drill through</h3>
        <div className="mt-[7px] flex h-6 items-center justify-between pr-5 pl-2.5">
          <label htmlFor="cross">Cross-report</label>
          <Toggle id="cross" />
        </div>
        <div className="mt-[10px] flex h-6 items-center justify-between pr-5 pl-2.5">
          <label htmlFor="keep">Keep all filters</label>
          <Toggle id="keep" on />
        </div>
        <div className="mt-3 flex h-8 items-center rounded-xs border border-dashed border-[#c0bebc] bg-white pl-2.5 whitespace-nowrap">
          Add drill-through fields here
        </div>
      </div>
    </aside>
  );
}

function DataPanel() {
  return (
    <aside className="flex w-[226px] shrink-0 flex-col border-l border-[#d9d7d5] bg-[#f3f2f1] text-sm text-[#252423]">
      <div className="flex items-center justify-between pt-[9px] pr-[9px] pl-[11px]">
        <h2 className="text-lg leading-[30px] font-semibold">Data</h2>
        <button aria-label="Collapse data">
          <DoubleChevron />
        </button>
      </div>
      <label className="mx-[5px] mt-[18px] flex h-[30px] items-center gap-2 rounded-sm border border-[#d2d0ce] border-b-[#605e5c] bg-white pl-[15px]">
        <Lens size={18} color="#605e5c" />
        <input
          aria-label="Search fields"
          placeholder="Search"
          className="min-w-0 flex-1 bg-transparent text-base outline-none placeholder:text-[#6f6d6b]"
        />
      </label>
      <button className="mt-3.5 ml-5 flex items-center leading-6">
        <Svg w={9} h={14}>
          <path d="m1 1 6 6-6 6" stroke="#605e5c" strokeWidth="1.300" />
        </Svg>
        <span className="mr-1.5 ml-[7px]">
          <Svg w={17}>
            <rect x="1" y="1" width="15" height="15" rx="2" stroke="#252423" strokeWidth="1.500" />
            <path d="M1 5.500h15M1 11h15M6 1v15M11 1v15" stroke="#252423" strokeWidth="1.300" />
          </Svg>
        </span>
        FitBitDataMarketing
      </button>
    </aside>
  );
}

/* ---------- status bar ---------- */

function StatusBar() {
  return (
    <footer className="flex h-[30px] items-center border-t border-b border-t-[#d9d7d5] border-b-black bg-[#f3f2f1] px-[5px] text-sm text-[#484644]">
      <span className="pt-1">Page 1 of 3</span>
      <button aria-label="Zoom out" className="mr-[7px] ml-auto text-base font-semibold">-</button>
      <div className="relative flex w-[125px] items-center">
        <span className="absolute left-1/2 h-[7px] w-px bg-[#605e5c]" />
        <input
          type="range"
          aria-label="Zoom"
          min={10}
          max={200}
          defaultValue={70}
          className="h-px w-full appearance-none bg-[#605e5c] [&::-webkit-slider-thumb]:h-[13px] [&::-webkit-slider-thumb]:w-[5px] [&::-webkit-slider-thumb]:appearance-none [&::-webkit-slider-thumb]:bg-[#605e5c]"
        />
      </div>
      <button aria-label="Zoom in" className="ml-1.5 text-base font-semibold">+</button>
      <span className="ml-[17px]">70%</span>
      <button aria-label="Fit to page" className="mr-[21px] ml-6">
        <Svg w={21} h={16}>
          <path d="M1 1h19v14H1z" stroke="#605e5c" strokeWidth="1.600" />
          <path d="M4 6.500V4h3M14 4h3v2.500M17 9.500V12h-3M7 12H4V9.500" stroke="#605e5c" strokeWidth="1.300" />
        </Svg>
      </button>
      <button className="pt-1 whitespace-nowrap">Update available (click to download)</button>
    </footer>
  );
}

/* ---------- taskbar ---------- */

const apps: [string, React.ReactNode, string?][] = [
  ["Start", <g key="a"><path d="M1 1h13.500v13.500H1z" fill="#35aef5" /><path d="M15.500 1H29v13.500H15.500zM1 15.500h13.500V29H1z" fill="#1c93e6" /><path d="M15.500 15.500H29V29H15.500z" fill="#0f7fd8" /></g>],
  ["Search", <g key="b" stroke="#252423" strokeWidth="3"><circle cx="17.500" cy="12" r="10" /><path d="M10.500 19.500 2 28" strokeWidth="4" /></g>],
  ["Power BI", <g key="c"><path d="M16 0h9q1.500 0 1.500 1.500V30H16z" fill="#d39a17" /><path d="M10 8h9q1.500 0 1.500 1.500V30H10z" fill="#f2c12f" /><path d="M4 15h9q1.500 0 1.500 1.500V30H5.500Q4 30 4 28.500z" fill="#f8cd7a" /></g>, "active"],
  ["Firefox", <g key="d"><circle cx="15" cy="16" r="13" fill="#f2552c" /><path d="M17 1c4 3 11 8 11 15 0 4-2 7-4 9 1-8-1-12-6-14-3-3-3-7-1-10z" fill="#fdc63a" /><path d="M4 6c2 2 5 2 7 3l-6 8c-1-4-2-8-1-11z" fill="#fba43a" /><circle cx="15.500" cy="16" r="6" fill="#7d45c8" /></g>],
  ["SQL tools", <g key="e"><path d="M4 2h14v18H4z" fill="#f9c33e" /><path d="M4 2h6v18H4z" fill="#f9b36a" /><path d="M21 2h7v6M2 22v6h7" stroke="#2e8b57" strokeWidth="3" /><path d="m14 28 11-10M15 18l11 10M13 18h4M23 17l4 2" stroke="#b072d6" strokeWidth="2.500" /></g>],
  ["Visual Studio Code", <g key="f"><path d="m21 1 8 4v20l-8 4z" fill="#2aa1ea" /><path d="M21 1v8L5 22l-4-3z" fill="#0f6fc0" /><path d="M21 29v-8L5 8l-4 3z" fill="#1c86d8" /></g>],
  ["Chrome", <g key="g"><circle cx="15" cy="15" r="14.500" fill="#f8c630" /><path d="M15 15 2.500 7.700A14.500 14.500 0 0 1 27.500 7.700z" fill="#e5412f" /><path d="M15 15 2.500 7.700A14.500 14.500 0 0 0 15 29.500L21 18z" fill="#2f9a4a" /><circle cx="15" cy="15" r="7" fill="#fff" /><circle cx="15" cy="15" r="5.500" fill="#1a78ea" /></g>, "dot"],
  ["ChatGPT", <g key="h" stroke="#111" strokeWidth="2.300">{[0, 60, 120, 180, 240, 300].map((r) => (<path key={r} transform={`rotate(${r} 15 15)`} d="M9.500 18V8.500c0-8 10.500-8.500 12-2M9.500 12l5.500-3.200 6 3.400" />))}</g>],
  ["File Explorer", <g key="i"><path d="M1 2h9l3 4h4v6H1z" fill="#d69a1e" /><path d="M1 6h28v22H1z" fill="#fac837" /><path d="M6 28v-5q0-3 3-3h12q3 0 3 3v5z" fill="#1478d0" /><path d="M9 23.500h12" stroke="#0b4f94" strokeWidth="1.500" /></g>, "dot"],
  ["Spotify", <g key="j"><circle cx="15" cy="15" r="14" fill="#1ed760" /><path d="M7 10c6-1.500 12-1 17 2" stroke="#111" strokeWidth="2.800" strokeLinecap="round" /><path d="M8 15c5-1 10-.5 14 2" stroke="#111" strokeWidth="2.300" strokeLinecap="round" /><path d="M9 19.500c4-1 8-.5 11 1.500" stroke="#111" strokeWidth="1.900" strokeLinecap="round" /></g>, "dot"],
];

const tray: [string, React.ReactNode][] = [
  ["Show hidden icons", <path key="a" d="m3 13 7-7 7 7" stroke="#252423" strokeWidth="1.500" />],
  ["Security", <g key="b"><path d="M10 0c3 2 6 3 9 3 0 8-2 13-9 17C3 16 1 11 1 3c3 0 6-1 9-3z" fill="#2a9bea" /><path d="M10 0c3 2 6 3 9 3v7h-9z" fill="#1371c2" /><circle cx="14.500" cy="14.500" r="5.500" fill="#27914a" /><path d="m12 14.500 2 2 3-4" stroke="#fff" strokeWidth="1.400" /></g>],
  ["OneDrive", <path key="c" d="M4 16c-5 0-4-7 1-7 2-6 9-6 11-1 5 0 5 8 0 8z" fill="#b5b3b1" stroke="#252423" strokeWidth="1.500" />],
  ["Antivirus", <g key="d"><path d="M10 1c3 2 6 2 9 2 0 8-2 13-9 17C3 16 1 11 1 3c3 0 6 0 9-2z" fill="#fff" stroke="#a44" /><path d="M10 1c3 2 6 2 9 2v7h-9zM10 10v10c-5-3-8-6-8.500-10z" fill="#d9542f" /></g>],
  ["NVIDIA", <g key="e"><path d="M0 0h20v20H0z" fill="#17191b" /><path d="M2 10c4-6 11-6 15-1-4 6-11 6-15 1z" stroke="#4fae4c" strokeWidth="1.300" /><circle cx="9" cy="9.500" r="2.500" stroke="#4fae4c" strokeWidth="1.300" /><path d="M13 6h5v8h-5z" fill="#2f7d43" /></g>],
  ["System monitor", <g key="f"><path d="M0 0h20v20H0z" fill="#b5b3b5" /><path d="M0 13h20v7H0z" fill="#3a3036" /><path d="M1 5h4v13H1zM15 5h4v13h-4z" fill="#5d5b60" /><path d="M6 12h8v8H6z" fill="#75737a" /><circle cx="10" cy="9.500" r="4.500" fill="#4aa3d8" stroke="#d8eaf5" /></g>],
  ["Bluetooth", <g key="g"><rect x="3" y="0" width="14" height="20" rx="7" fill="#0a84f0" /><path d="m6.500 6.500 7 7L10 17V3l3.500 3.500-7 7" stroke="#fff" strokeWidth="1.400" /></g>],
];

function Taskbar() {
  return (
    <div className="grid h-[60px] grid-cols-[1fr_auto_1fr] items-center bg-linear-to-r from-[#ecdad3] via-[#ebdbcd] to-[#efdfd5]">
      <div className="h-full bg-linear-to-r from-[#eddbd4] via-[#efe0d0] via-65% to-[#e8dac8]" />
      <div className="flex">
        {apps.map(([name, icon, state]) => (
          <button key={name} aria-label={name} className="relative flex h-[60px] w-[55px] items-center justify-center">
            {state === "active" && <span className="absolute top-1.5 left-1 h-12 w-12 rounded-sm bg-[#f8f1e8] shadow-[0_0_1px_rgba(0,0,0,0.3)]" />}
            <span className="relative">
              <Svg w={30}>{icon}</Svg>
            </span>
            {state === "active" && <span className="absolute bottom-1.5 h-1 w-5 rounded-full bg-[#2f7b9f]" />}
            {state === "dot" && <span className="absolute bottom-1.5 h-1 w-2 rounded-full bg-[#85807c]" />}
          </button>
        ))}
      </div>
      <div className="flex items-center justify-end pr-[25px] text-sm text-[#252423]">
        {tray.map(([name, icon]) => (
          <button key={name} aria-label={name} className="mr-2.5">
            <Svg w={20}>{icon}</Svg>
          </button>
        ))}
        <button className="mr-[22px] ml-2">ENG</button>
        <button aria-label="Network, sound and battery" className="mr-5 flex items-center gap-2.5">
          <Svg w={20} h={18}>
            <path d="M1 6c5-5.500 13-5.500 18 0M4 9.500c4-4 8-4 12 0M7 12.500c2-2 4-2 6 0" stroke="#252423" strokeWidth="1.500" />
            <circle cx="10" cy="15.500" r="1.600" fill="#252423" />
          </Svg>
          <Svg w={20} h={18}>
            <path d="M1 6h4l4-4v14l-4-4H1zM12 6c2 2 2 4 0 6M14.500 3.500c3.500 3 3.500 8 0 11" stroke="#252423" strokeWidth="1.400" />
            <path d="M17 1.500c4 4 4 11 0 15" stroke="#a19f9d" strokeWidth="1.300" />
          </Svg>
          <Svg w={20} h={14}>
            <rect x="1" y="1" width="16" height="12" rx="2.500" stroke="#252423" strokeWidth="1.500" />
            <path d="M3.500 3.500H7v7H3.500zM18 5h2v4h-2z" fill="#252423" />
          </Svg>
        </button>
        <div className="text-right leading-5 text-[#1b1a19]">
          <div>8:54 PM</div>
          <div>7/16/2025</div>
        </div>
        <span className="ml-2.5 flex size-5 items-center justify-center rounded-full bg-[#2f7b93] text-xs text-white">1</span>
      </div>
    </div>
  );
}

function Watermark() {
  return (
    <div
      className="pointer-events-none absolute bottom-4 left-1/2 z-20 flex -translate-x-1/2 flex-col items-center text-[#8c8c8c]/20"
      aria-hidden
    >
      <span className="font-['DejaVu_Sans',sans-serif] text-[65px] leading-[76px] font-bold whitespace-nowrap">مستقل</span>
      <span className="font-['Liberation_Sans',sans-serif] text-[38px] leading-[44px] font-bold">mostaql.com</span>
    </div>
  );
}

export default function App() {
  return (
    <div className="relative flex min-h-screen flex-col overflow-hidden bg-white font-['Noto_Sans',sans-serif]">
      <TitleBar />
      <MenuBar />
      <Ribbon />
      <main className="flex flex-1">
        <Rail />
        <div className="flex min-w-0 flex-1 flex-col justify-between">
          <ReportCanvas />
          <PageTabs />
        </div>
        <VisualizationsPanel />
        <DataPanel />
      </main>
      <StatusBar />
      <Taskbar />
      <Watermark />
    </div>
  );
}
